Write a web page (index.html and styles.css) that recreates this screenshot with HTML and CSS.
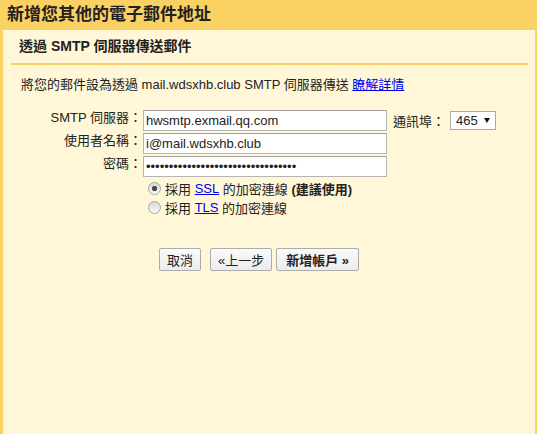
FILE: index.html
```html
<!DOCTYPE html>
<html lang="zh-Hant">
<head>
<meta charset="utf-8">
<title>新增您其他的電子郵件地址</title>
<link rel="stylesheet" href="styles.css">
</head>
<body>
<div class="dialog">
  <div class="header"><h1 class="title">新增您其他的電子郵件地址</h1></div>
  <div class="panel">
    <h2 class="subtitle">透過 SMTP 伺服器傳送郵件</h2>
    <div class="rule"></div>
    <p class="desc">將您的郵件設為透過 mail.wdsxhb.club SMTP 伺服器傳送 <a href="#" class="link">瞭解詳情</a></p>
    <div class="form">
      <label class="lbl">SMTP 伺服器：</label>
      <input class="field" type="text" value="hwsmtp.exmail.qq.com">
      <div class="port">
        <span class="port-lbl">通訊埠：</span>
        <div class="select-wrap">
          <select class="select"><option>465</option><option>587</option><option>25</option></select>
          <span class="arrow"></span>
        </div>
      </div>
      <label class="lbl">使用者名稱：</label>
      <input class="field" type="text" value="i@mail.wdsxhb.club">
      <div></div>
      <label class="lbl">密碼：</label>
      <input class="field" type="password" value="xxxxxxxxxxxxxxxxxxxxxxxxxxxxxxxxx">
      <div></div>
      <div class="radios">
        <label class="radio-row"><input class="radio" type="radio" name="sec" checked>採用 <a href="#" class="link">SSL</a> 的加密連線 <b class="strong">(建議使用)</b></label>
        <label class="radio-row"><input class="radio" type="radio" name="sec">採用 <a href="#" class="link">TLS</a> 的加密連線</label>
      </div>
    </div>
    <div class="buttons">
      <button class="btn btn-cancel">取消</button>
      <button class="btn">«上一步</button>
      <button class="btn btn-primary">新增帳戶 »</button>
    </div>
  </div>
</div>
</body>
</html>
```
FILE: styles.css
```css
html, body {
  margin: 0;
  padding: 0;
  height: 100%;
}
body {
  font-family: "Liberation Sans", "Noto Sans CJK TC", sans-serif;
  font-size: 13px;
  color: #222;
  background: #fff7d7;
}
.dialog {
  display: flex;
  flex-direction: column;
  height: 434px;
}
.header {
  background: #fad163;
  height: 30px;
  padding-left: 7px;
  box-sizing: border-box;
}
.title {
  margin: 0;
  padding-top: 4px;
  font-size: 17px;
  line-height: 22px;
  font-weight: bold;
  color: #222;
}
.panel {
  flex: 1;
  background: #fff7d7;
  border-left: 3px solid #fad163;
  border-right: 2px solid #fad163;
  padding: 0 7px 0 8px;
}
.subtitle {
  margin: 0;
  padding: 8px 0 8px 8px;
  font-size: 14px;
  line-height: 17px;
  font-weight: bold;
  color: #222;
}
.rule {
  height: 2px;
  background: #fad163;
}
.desc {
  margin: 12px 0 0 10px;
  line-height: 16px;
}
.link {
  color: #0000ee;
  text-decoration: underline;
}
.form {
  margin-top: 17px;
  display: grid;
  grid-template-columns: 128px 244px auto;
  grid-template-rows: 21px 21px 21px auto;
  column-gap: 4px;
  row-gap: 2px;
}
.lbl {
  text-align: right;
  line-height: 16px;
  white-space: nowrap;
  margin-right: -3px;
}
.field {
  box-sizing: border-box;
  height: 21px;
  width: 244px;
  margin: 0;
  padding: 0 2px;
  border: 1px solid #b5b5b5;
  border-top-color: #a0a0a0;
  border-radius: 0;
  background: #fff;
  font-family: "Liberation Sans", "Noto Sans CJK TC", sans-serif;
  font-size: 13px;
  color: #222;
  outline: none;
}
.port {
  display: flex;
  align-items: center;
  margin-left: 2px;
  white-space: nowrap;
}
.select-wrap {
  position: relative;
  margin-left: 5px;
}
.select {
  appearance: none;
  -webkit-appearance: none;
  box-sizing: border-box;
  width: 46px;
  height: 19px;
  margin: 0;
  padding: 0 0 0 5px;
  border: 1px solid #aaa;
  border-radius: 0;
  background: #fff;
  font-family: "Liberation Sans", sans-serif;
  font-size: 13px;
  color: #222;
  display: block;
}
.arrow {
  position: absolute;
  right: 6px;
  top: 7px;
  width: 0;
  height: 0;
  border-left: 3px solid transparent;
  border-right: 3px solid transparent;
  border-top: 5px solid #111;
  pointer-events: none;
}
.radios {
  grid-column: 2 / span 2;
  display: flex;
  flex-direction: column;
}
.radio-row {
  display: flex;
  align-items: center;
  height: 19px;
  white-space: pre;
}
.radio {
  appearance: none;
  -webkit-appearance: none;
  box-sizing: border-box;
  width: 13px;
  height: 13px;
  margin: 0 4px 0 5px;
  border: 1px solid #a6a6a6;
  border-radius: 50%;
  background: linear-gradient(#d6d6d6, #fafafa);
}
.radio:checked {
  background: radial-gradient(circle, #4a4a4a 0 2.3px, transparent 3px), linear-gradient(#d6d6d6, #fafafa);
}
.strong {
  font-weight: bold;
}
.buttons {
  display: flex;
  gap: 4px;
  margin: 31px 0 0 148px;
}
.btn {
  box-sizing: border-box;
  height: 23px;
  margin: 0;
  padding: 0 7px;
  border: 1px solid #acacac;
  border-radius: 2px;
  background: linear-gradient(#fafafa, #ececec);
  font-family: "Liberation Sans", "Noto Sans CJK TC", sans-serif;
  font-size: 13px;
  color: #222;
  white-space: pre;
}
.btn-cancel {
  margin-right: 5px;
}
.btn-primary {
  font-weight: bold;
  padding: 0 9px;
}
```
